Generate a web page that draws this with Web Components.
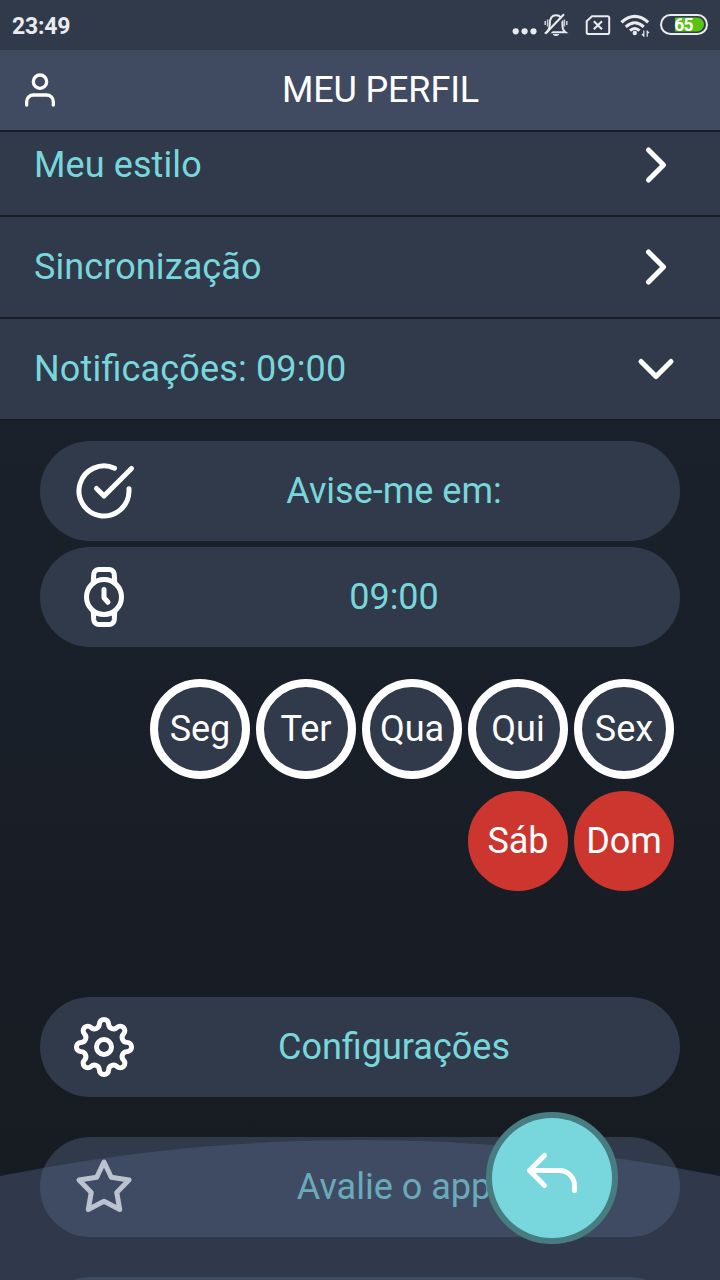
<!DOCTYPE html>
<html lang="pt-BR">
<head>
<meta charset="utf-8">
<title>Meu perfil</title>
<style>
html, body { margin: 0; height: 100%; }
body {
  --panel: #313a4a; --bar: #404b62; --accent: #78d7dc; --line: #181c25;
  font: 36px/1 Roboto, sans-serif; color: #fff;
  background: #191d25; overflow: hidden;
}
</style>
</head>
<body>
<profile-screen></profile-screen>

<script>
// contorno da engrenagem: 8 dentes arredondados
function gearPath(tip = 11, r = 1.85, valley = 8){
  const half = Math.PI / 8, c = tip - r;
  const a = c * Math.cos(half), p = c * Math.sin(half), k = a - valley;
  const s = (k*k + p*p - r*r) / (2 * (r + k));
  const f = r / (r + s);
  const x = a + (valley + s - a) * f, y = p * (1 - f);
  const pt = (i, yy) => {
    const t = half + i * half * 2;
    return [12 + x*Math.cos(t) - yy*Math.sin(t), 12 + x*Math.sin(t) + yy*Math.cos(t)].map(n=>n.toFixed(2)).join(' ');
  };
  // arco do dente maior que 180° quando a tangente fica atrás do centro dele
  const large = x * Math.cos(half) + y * Math.sin(half) < c ? 1 : 0;
  let d = 'M' + pt(0, -y);
  for (let i = 0; i < 8; i++) {
    d += `A${s} ${s} 0 0 0 ${pt(i, y)}A${r} ${r} 0 ${large} 1 ${pt(i+1, -y)}`;
  }
  return d + 'Z';
}

const ICONS = {
  user: '<circle cx="12" cy="7" r="4"/><path d="M4 21v-2a4 4 0 0 1 4-4h8a4 4 0 0 1 4 4v2"/>',
  right: '<path d="M9 6l6 6-6 6"/>',
  down: '<path d="M6 9l6 6 6-6"/>',
  check: '<path d="M22 11.1V12A10 10 0 1 1 16.2 2.9"/><path d="M9 11l3 3L23 3"/>',
  watch: '<circle cx="12" cy="12" r="7"/><path d="M7.7 6.4L7.9 2.8A2 2 0 0 1 9.9 1h4.2a2 2 0 0 1 2 1.8l.2 3.6M7.7 17.6l.2 3.6A2 2 0 0 0 9.9 23h4.2a2 2 0 0 0 2-1.8l.2-3.6M12 9v3.3l1.6 1.8"/>',
  gear: `<circle cx="12" cy="12" r="3"/><path d="${gearPath()}"/>`,
  star: '<path d="M12 2l2.9 6.1L22 9.2l-4.9 5L18.3 21 12 17.7 5.7 21l1.2-6.8L2 9.2l7.1-1.1z"/>',
  back: '<path d="M9 3L3 9l6 6M3 9h12a6 6 0 0 1 6 6v2"/>'
};

function define(name, html, setup){
  customElements.define(name, class extends HTMLElement {
    constructor(){
      super();
      const tpl = document.createElement('template');
      tpl.innerHTML = html;
      this.attachShadow({mode:'open'}).appendChild(tpl.content.cloneNode(true));
    }
    connectedCallback(){ if (setup) setup(this, this.shadowRoot); }
  });
}

define('app-icon', `
<style>
:host { display: block; flex: none; width: 60px; height: 60px; }
svg { display: block; width: 100%; height: 100%; overflow: visible; }
</style>
<svg viewBox="0 0 24 24" fill="none" stroke="currentColor" stroke-width="2" stroke-linecap="round" stroke-linejoin="round"></svg>
`, (el, root) => { root.querySelector('svg').innerHTML = ICONS[el.getAttribute('name')]; });

define('status-bar', `
<style>
:host { display: flex; align-items: center; justify-content: space-between; height: 50px; padding: 0 12px; box-sizing: border-box; background: var(--panel); color: #e9ebee; }
.time { font-size: 23px; font-weight: 700; line-height: 26px; margin-top: 4px; letter-spacing: -.2px; }
svg { display: block; width: 200px; height: 50px; }
</style>
<div class="time">23:49</div>
<svg viewBox="508 0 200 50" fill="none" stroke="currentColor" stroke-width="2">
  <g fill="currentColor" stroke="none"><circle cx="515.7" cy="31.3" r="3.1"/><circle cx="524.6" cy="31.3" r="3.1"/><circle cx="533.5" cy="31.3" r="3.1"/></g>
  <!-- sino silenciado -->
  <path d="M546.5 32.3H565.5C562.5 30 562.5 28 562.5 24C562.5 18.5 560 15.3 556 15.3S549.8 18.5 549.8 24C549.8 27.5 549 30 546.5 32.3Z" stroke-width="2"/>
  <path d="M547 35.5L565.5 15.5" stroke="#313a4a" stroke-width="2.5"/>
  <path d="M545.3 33.8L564 14.3" stroke-width="2.1"/>
  <path d="M547.6 19.5V26.5M545.2 21V25M564.4 19.5V26.5M566.8 21V25" stroke-width="1.6" stroke-opacity=".8"/>
  <path d="M553 34.5H559Q556 37 553 34.5Z" fill="currentColor" stroke-width=".8"/>
  <!-- sem chip -->
  <path d="M592 16.2H607.5Q609.2 16.2 609.2 18V32.2Q609.2 34 607.5 34H588.4Q586.7 34 586.7 32.2V21.3Z" stroke-width="2"/>
  <path d="M593.8 21.2L602 29.2M602 21.2L593.8 29.2" stroke-width="2.1"/>
  <!-- wifi -->
  <g stroke-width="3.1"><path d="M621.5 22.3Q634.8 10.5 648.2 22.3M625.8 26.8Q634.8 18.7 643.8 26.8M630 30.6Q634.8 26.4 639.5 30.6"/></g>
  <circle cx="634.8" cy="33" r="2.2" fill="currentColor" stroke="none"/>
  <path d="M643.8 30.5V36.8M647.2 30.5V36.8M642 34L643.8 36M649 33.2L647.2 31.2" stroke-width="1.2"/>
  <!-- bateria -->
  <rect x="661" y="15" width="46" height="19" rx="9.5"/>
  <path d="M675 17.5H697A7 7 0 0 1 697 31.5H675Z" fill="#58c313" stroke="none"/>
  <text x="683.6" y="30.8" text-anchor="middle" font-family="Roboto, sans-serif" font-size="17.5" font-weight="700" letter-spacing="-.6" fill="#fff" stroke="none">65</text>
</svg>
`);

define('title-bar', `
<style>
:host { display: flex; align-items: center; height: 80px; padding: 0 20px; background: var(--bar); border-bottom: 2px solid var(--line); }
app-icon { width: 40px; height: 40px; }
.title { flex: 1; text-align: center; letter-spacing: -.15px; padding-left: 1px; }
</style>
<app-icon name="user"></app-icon>
<div class="title"><slot></slot></div>
`);

define('menu-row', `
<style>
:host { display: flex; align-items: center; justify-content: space-between; height: 100px; padding: 0 34px; background: var(--panel); color: var(--accent); border-bottom: 2px solid var(--line); letter-spacing: .1px; font-feature-settings: "liga" 1; }
:host([open]) { letter-spacing: .16px; }
app-icon { color: #fff; }
</style>
<slot></slot><app-icon></app-icon>
`, (el, root) => {
  const icon = root.querySelector('app-icon');
  icon.setAttribute('name', el.hasAttribute('open') ? 'down' : 'right');
  icon.connectedCallback();
});

define('pill-button', `
<style>
:host { display: flex; align-items: center; height: 100px; flex: none; box-sizing: border-box; padding: 0 26px 0 34px; border-radius: 50px; background: var(--panel); color: var(--accent); }
app-icon { color: #fff; }
.text { flex: 1; text-align: center; }
</style>
<app-icon></app-icon>
<div class="text"><slot></slot></div>
`, (el, root) => {
  const icon = root.querySelector('app-icon');
  icon.setAttribute('name', el.getAttribute('icon'));
  icon.connectedCallback();
});

define('day-toggle', `
<style>
:host { display: flex; align-items: center; justify-content: center; width: 100px; height: 100px; box-sizing: border-box; border-radius: 50%; background: var(--panel); border: 8px solid #fff; }
:host([off]) { background: #cc362f; border-color: #cc362f; }
</style>
<slot></slot>
`);

define('bottom-dock', `
<style>
:host { position: absolute; left: 0; right: 0; bottom: 0; height: 140px; }
svg { display: block; }
.fab { position: absolute; left: 486px; top: -28px; width: 132px; height: 132px; box-sizing: border-box; border: 6px solid #477d80; border-radius: 50%; background: #477d80; display: flex; }
.inner { flex: 1; border-radius: 50%; background: var(--accent); display: flex; align-items: center; justify-content: center; }
</style>
<svg width="720" height="140"><circle cx="360" cy="1818" r="1818" fill="rgb(85,103,137)" fill-opacity=".4"/></svg>
<div class="fab"><div class="inner"><app-icon name="back"></app-icon></div></div>
`);

define('profile-screen', `
<style>
:host { display: flex; flex-direction: column; position: relative; width: 720px; height: 1280px; overflow: hidden; }
.scroll { flex: 1; min-height: 0; overflow: hidden; background: linear-gradient(#1a232d, #191f28 50%, #171b22 90%); }
.rows { margin-top: -17px; }
.group { display: flex; flex-direction: column; gap: 6px; padding: 20px 40px 0; }
.days { display: flex; flex-wrap: wrap; justify-content: flex-end; gap: 12px 6px; padding: 32px 46px 0 140px; }
.more { gap: 40px; padding-top: 106px; }
</style>
<status-bar></status-bar>
<title-bar>MEU PERFIL</title-bar>
<div class="scroll">
  <div class="rows">
    <menu-row>Meu estilo</menu-row>
    <menu-row>Sincronização</menu-row>
    <menu-row open>Notificações: 09:00</menu-row>
  </div>
  <div class="group">
    <pill-button icon="check">Avise-me em:</pill-button>
    <pill-button icon="watch">09:00</pill-button>
  </div>
  <div class="days">
    <day-toggle>Seg</day-toggle>
    <day-toggle>Ter</day-toggle>
    <day-toggle>Qua</day-toggle>
    <day-toggle>Qui</day-toggle>
    <day-toggle>Sex</day-toggle>
    <day-toggle off>Sáb</day-toggle>
    <day-toggle off>Dom</day-toggle>
  </div>
  <div class="group more">
    <pill-button icon="gear">Configurações</pill-button>
    <pill-button icon="star">Avalie o app</pill-button>
    <pill-button icon="user"></pill-button>
  </div>
</div>
<bottom-dock></bottom-dock>
`);
</script>
</body>
</html>
